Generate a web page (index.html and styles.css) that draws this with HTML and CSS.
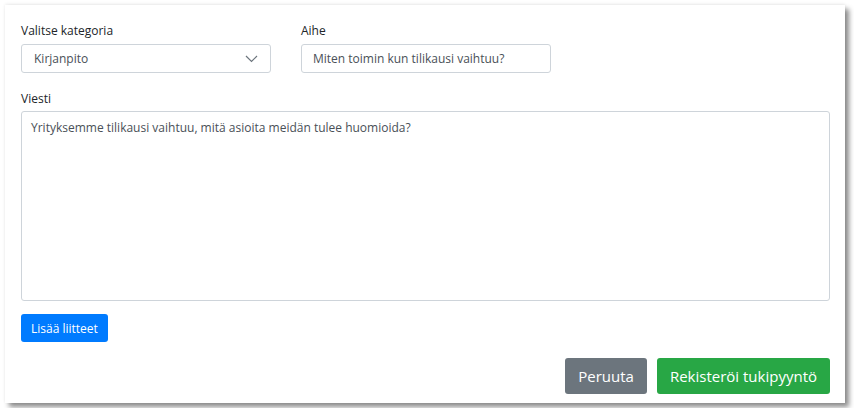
FILE: index.html
```html
<!DOCTYPE html>
<html lang="fi">
<head>
  <meta charset="UTF-8" />
  <title>Tukipyyntö</title>
  <meta name="viewport" content="width=device-width, initial-scale=1.0"/>
  <link rel="stylesheet" href="styles.css">
</head>
<body>
  <div class="card">
    <div class="row">
      <div class="field">
        <label for="category">Valitse kategoria</label>
        <div class="select-wrap">
          <select id="category" class="control">
            <option>Kirjanpito</option>
            <option>Palkanlaskenta</option>
            <option>Laskutus</option>
          </select>
          <svg class="chevron" width="13" height="8" viewBox="0 0 13 8"><path d="M1 1 L6.5 6.5 L12 1" fill="none" stroke="#6c757d" stroke-width="1.2"/></svg>
        </div>
      </div>
      <div class="field">
        <label for="subject">Aihe</label>
        <input id="subject" class="control input" type="text" value="Miten toimin kun tilikausi vaihtuu?"/>
      </div>
    </div>
    <div class="section">
      <label for="message">Viesti</label>
      <textarea id="message" class="control textarea">Yrityksemme tilikausi vaihtuu, mitä asioita meidän tulee huomioida?</textarea>
    </div>
    <button class="btn btn-small btn-blue">Lisää liitteet</button>
    <div class="actions">
      <button class="btn btn-gray">Peruuta</button>
      <button class="btn btn-green">Rekisteröi tukipyyntö</button>
    </div>
  </div>
</body>
</html>
```

FILE: styles.css
```css
body { margin: 0; background: #fff; font-family: "Open Sans", "Noto Sans", sans-serif; font-size: 12px; color: #212529; }
.card {
  margin: 5px;
  width: 840px;
  height: 398px;
  box-sizing: border-box;
  padding: 16px 15px 0 16px;
  background: #fff;
  box-shadow: 4px 4px 5px rgba(0, 0, 0, 0.45), 0 -1px 3px rgba(0, 0, 0, 0.08);
}
.row { display: flex; gap: 30px; }
.field { width: 250px; }
label { display: block; line-height: 19.5px; margin-bottom: 3px; }
.section { margin-top: 16px; }
.control {
  display: block;
  width: 100%;
  box-sizing: border-box;
  height: 29px;
  border: 1px solid #ced4da;
  border-radius: 3px;
  background: #fff;
  color: #495057;
  font-family: inherit;
  font-size: 12px;
  margin: 0;
}
.select-wrap { position: relative; }
select.control { appearance: none; -webkit-appearance: none; padding: 0 12px; }
.chevron { position: absolute; right: 13px; top: 11px; pointer-events: none; }
.input { padding: 0 11px; }
.textarea { height: 190px; padding: 6px 9px; resize: none; line-height: 19.5px; }
.btn {
  border: none;
  border-radius: 3px;
  color: #fff;
  font-family: inherit;
  cursor: pointer;
}
.btn-small { margin-top: 13px; height: 28px; padding: 0 10px; font-size: 12px; }
.btn-blue { background: #007bff; }
.actions { display: flex; justify-content: flex-end; gap: 10px; margin-top: 16px; }
.actions .btn { height: 36px; padding: 0 13px; font-size: 15px; }
.btn-gray { background: #6c757d; }
.btn-green { background: #28a745; }
```
